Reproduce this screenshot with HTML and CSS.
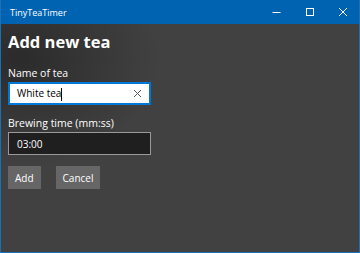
FILE: index.html
```html
<!DOCTYPE html>
<html lang="en">
<head>
  <meta charset="UTF-8">
  <title>TinyTeaTimer</title>
  <link rel="stylesheet" href="styles.css">
</head>
<body>

  <div class="window">

    <div class="titlebar">
      <span class="app-name">TinyTeaTimer</span>
      <div class="controls">
        <div class="ctrl">
          <svg width="10" height="10" viewBox="0 0 10 10"><path d="M0.5 5.5h8" stroke="#fff" stroke-width="1"/></svg>
        </div>
        <div class="ctrl">
          <svg width="10" height="10" viewBox="0 0 10 10"><rect x="1.5" y="1.5" width="7" height="7" fill="none" stroke="#fff" stroke-width="1"/></svg>
        </div>
        <div class="ctrl">
          <svg width="10" height="10" viewBox="0 0 10 10"><path d="M1 1l8 8M9 1l-8 8" stroke="#fff" stroke-width="1"/></svg>
        </div>
      </div>
    </div>

    <div class="content">
      <h1>Add new tea</h1>

      <div class="field">
        <label>Name of tea</label>
        <div class="textbox focused">
          <span class="value">White tea<span class="caret"></span></span>
          <svg class="clear" width="9" height="9" viewBox="0 0 9 9"><path d="M1 1l7 7M8 1l-7 7" stroke="#555" stroke-width="1"/></svg>
        </div>
      </div>

      <div class="field">
        <label>Brewing time (mm:ss)</label>
        <div class="textbox">
          <span class="value">03:00</span>
        </div>
      </div>

      <div class="buttons">
        <button class="btn">Add</button>
        <button class="btn">Cancel</button>
      </div>
    </div>

  </div>

</body>
</html>
```

FILE: styles.css
```css
* {
  margin: 0;
  padding: 0;
  box-sizing: border-box;
}

body {
  font-family: 'Open Sans', 'Noto Sans', sans-serif;
  background: #0063b1;
  color: white;
  width: 360px;
  height: 253px;
  overflow: hidden;
}

.window {
  width: 360px;
  height: 253px;
  border: 1px solid #1a6fb5;
  border-top: none;
  display: flex;
  flex-direction: column;
}

.titlebar {
  height: 24px;
  background: #0063b1;
  display: flex;
  align-items: center;
  justify-content: space-between;
  padding-left: 9px;
}

.app-name {
  font-size: 9px;
  color: #fff;
}

.controls {
  display: flex;
  height: 100%;
}

.ctrl {
  width: 33px;
  height: 100%;
  display: flex;
  align-items: center;
  justify-content: center;
}

.content {
  flex: 1;
  background: radial-gradient(ellipse 140px 110px at 5% 15%, #2b2b2b 0%, #363636 50%, rgba(64, 64, 64, 0) 100%), #414141;
  padding: 7px 7px 0;
}

h1 {
  font-size: 16.5px;
  font-weight: 700;
  line-height: 22px;
  margin-bottom: 13px;
}

.field {
  margin-bottom: 11px;
}

.field label {
  display: block;
  font-size: 10.5px;
  line-height: 14px;
  margin-bottom: 2px;
}

.textbox {
  width: 143px;
  height: 23px;
  border: 1px solid #9a9a9a;
  background: #1f1f1f;
  display: flex;
  align-items: center;
  justify-content: space-between;
  padding: 0 8px;
  font-size: 10px;
  color: #fff;
}

.textbox.focused {
  border: 2px solid #0078d7;
  background: #fff;
  color: #000;
  padding: 0 7px;
}

.caret {
  display: inline-block;
  width: 1px;
  height: 13px;
  background: #000;
  vertical-align: middle;
}

.buttons {
  display: flex;
  gap: 15px;
  margin-top: 4px;
}

.btn {
  font-family: inherit;
  font-size: 10px;
  color: #fff;
  background: #666;
  border: none;
  height: 23px;
  padding: 0 7px;
}
```
